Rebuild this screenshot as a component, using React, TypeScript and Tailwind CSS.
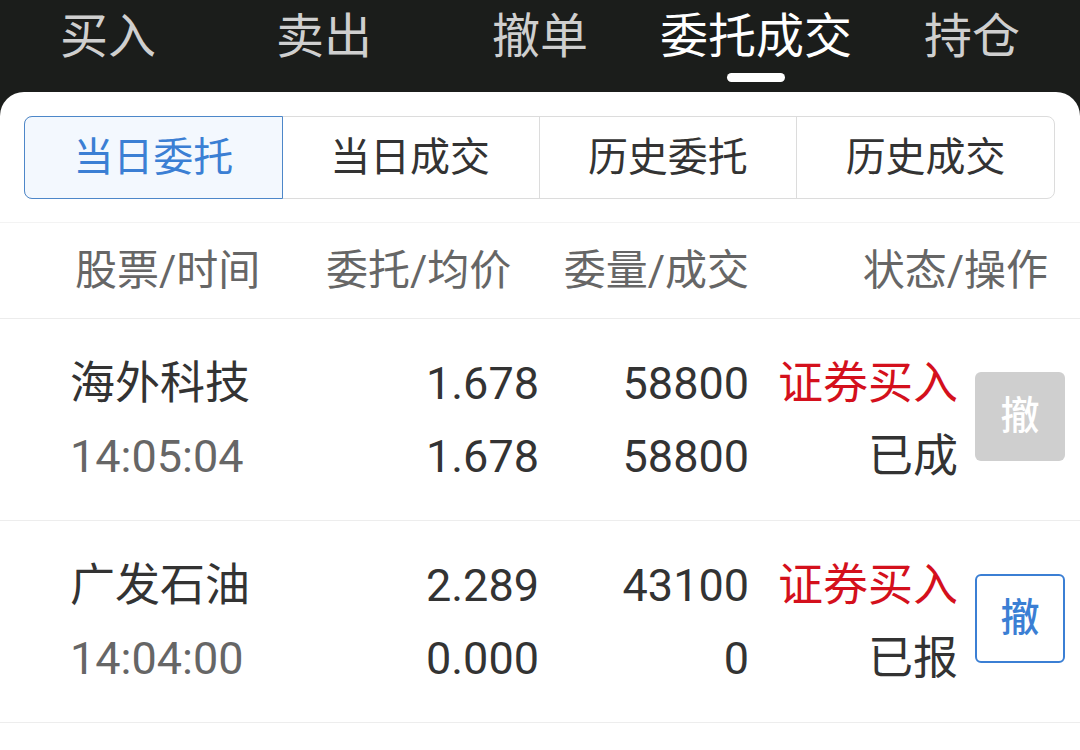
import React from 'react';

const topTabs = ['买入', '卖出', '撤单', '委托成交', '持仓'];
const segments = ['当日委托', '当日成交', '历史委托', '历史成交'];

const orders = [
  { name: '海外科技', time: '14:05:04', price: '1.678', avg: '1.678', qty: '58800', done: '58800', side: '证券买入', status: '已成', cancelable: false },
  { name: '广发石油', time: '14:04:00', price: '2.289', avg: '0.000', qty: '43100', done: '0', side: '证券买入', status: '已报', cancelable: true },
];

const App = () => {
  const activeTop = 3;
  const activeSeg = 0;

  return (
    <div className="w-[1080px] h-[750px] overflow-hidden bg-[#1b1d1b] font-[Roboto,'Noto_Sans_CJK_SC',sans-serif]">
      {/* top tabs */}
      <div className="grid grid-cols-5 h-[92px]">
        {topTabs.map((t, i) => (
          <div key={t} className="flex flex-col items-center">
            <span className={`pt-[13px] text-[48px] leading-[48px] ${i === activeTop ? 'text-white' : 'text-[#cfcfcf]'}`}>{t}</span>
            <span className={`mt-[12px] h-[9px] w-[58px] rounded-full ${i === activeTop ? 'bg-white' : 'bg-transparent'}`}></span>
          </div>
        ))}
      </div>

      <div className="bg-white rounded-t-[24px] h-[658px]">
        {/* segmented control */}
        <div className="pt-[24px] pb-[23px] pl-[24px] pr-[25px] border-b border-[#f3f3f3]">
          <div className="flex h-[83px] rounded-[8px] border border-[#dcdcdc]">
            {segments.map((s, i) => (
              <div
                key={s}
                className={`flex-1 flex items-center justify-center text-[40px] ${
                  i === activeSeg
                    ? 'bg-[#f3f8fe] text-[#3b7fd4] border border-[#4d87c9] -m-px rounded-l-[8px]'
                    : 'text-[#333333] border-l border-[#dcdcdc]'
                } ${i === 1 ? 'border-l-0' : ''}`}
              >
                {s}
              </div>
            ))}
          </div>
        </div>

        {/* header */}
        <div className="flex items-center h-[96px] pl-[75px] text-[42px] text-[#666666] whitespace-nowrap border-b border-[#ececec]">
          <div className="w-[265px]">股票/时间</div>
          <div className="w-[170px] text-right -ml-[14px]">委托/均价</div>
          <div className="w-[253px] text-right">委量/成交</div>
          <div className="w-[299px] text-right">状态/操作</div>
        </div>

        {/* rows */}
        {orders.map((o) => (
          <div key={o.name} className="flex items-center h-[202px] pl-[70px] text-[45px] leading-[73px] whitespace-nowrap border-b border-[#ededed]">
            <div className="w-[270px]">
              <div className="text-[#333333]">{o.name}</div>
              <div className="text-[#666666]">{o.time}</div>
            </div>
            <div className="w-[199px] text-right text-[#333333]">
              <div>{o.price}</div>
              <div>{o.avg}</div>
            </div>
            <div className="w-[210px] text-right text-[#333333]">
              <div>{o.qty}</div>
              <div>{o.done}</div>
            </div>
            <div className="w-[209px] text-right">
              <div className="text-[#d4101c]">{o.side}</div>
              <div className="text-[#333333]">{o.status}</div>
            </div>
            <button
              className={`ml-[17px] -mt-[6px] w-[90px] h-[89px] rounded-[6px] flex items-center justify-center text-[39px] font-medium leading-none ${
                o.cancelable ? 'bg-white border-2 border-[#3b7fd4] text-[#3b7fd4]' : 'bg-[#cfcfcf] text-white'
              }`}
            >
              撤
            </button>
          </div>
        ))}
      </div>
    </div>
  );
};

export default App;
